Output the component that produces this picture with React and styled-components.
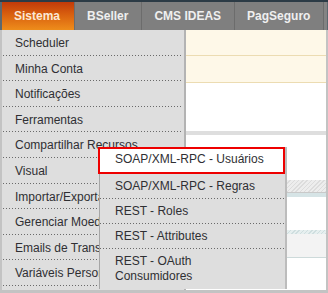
import React from 'react';
import styled, { createGlobalStyle, css } from 'styled-components';

const Global = createGlobalStyle`
  html, body { margin: 0; padding: 0; background: #fff; }
  * { box-sizing: border-box; }
`;

const Frame = styled.div`
  width: 328px;
  height: 293px;
  background: #c3c3c3;
  padding: 0 2px 3px;
  display: flex;
  flex-direction: column;
  font-family: "Liberation Sans", Arial, sans-serif;
  font-size: 12px;
`;

const Nav = styled.div`
  display: flex;
  height: 30px;
  margin: 0 -2px;
  padding: 0 3px 0 2px;
  border-top: 2px solid #2c3b46;
  background: #848484;
  box-shadow: inset 2px 0 0 #5c6870, inset -1px 0 0 #5c6870;
`;

const Tab = styled.div`
  height: 28px;
  line-height: 28px;
  font-weight: bold;
  white-space: nowrap;
  color: #efefef;
  background: #7f7f7f;
  padding: 0 13px 0 12px;
  border-left: 1px solid #6c6c6c;
  ${(p) => p.$last && css`border-right: 1px solid #6c6c6c;`}
  ${(p) =>
    p.$active &&
    css`
      border-left: 0;
      padding: 0 14px 0 12px;
      color: #fbe8d6;
      background: linear-gradient(to bottom, #c23a09 0%, #d9600f 45%, #ee8d1b 100%);
    `}
`;

const Body = styled.div`
  flex: 1;
  position: relative;
  display: flex;
  background: #fff;
`;

const Menu = styled.ul`
  width: 184px;
  margin: 0;
  padding: 0;
  list-style: none;
  background: #dedede;
  border-right: 2px solid #b3b3b3;
`;

const dotted = css`
  background-image: linear-gradient(to right, #6a6a6a 1px, transparent 1px);
  background-size: 3px 1px;
  background-repeat: repeat-x;
  background-position: 0 100%;
`;

const MenuItem = styled.li`
  height: 25.6px;
  margin: 0 1px;
  padding: 2px 0 0 12px;
  line-height: 23.6px;
  color: #2f2f33;
  white-space: nowrap;
  ${dotted}
`;

const Content = styled.div`
  flex: 1;
  display: flex;
  flex-direction: column;
`;

const Band = styled.div`
  height: ${(p) => p.$h}px;
  flex: none;
  background: ${(p) => p.$bg || '#fff'};
  ${(p) => p.$line && css`border-bottom: 1px solid ${p.$line};`}
`;

const Hatch = styled.div`
  height: ${(p) => p.$h}px;
  flex: none;
  background: repeating-linear-gradient(
    -45deg,
    ${(p) => p.$a} 0px,
    ${(p) => p.$a} 1px,
    ${(p) => p.$b} 1px,
    ${(p) => p.$b} 3px
  );
  ${(p) => p.$line && css`border-bottom: 1px solid ${p.$line};`}
`;

const Flyout = styled.ul`
  position: absolute;
  left: 97px;
  top: 117px;
  width: 188px;
  margin: 0;
  padding: 0;
  list-style: none;
  background: #dedede;
  border-left: 1px solid #a6a6a6;
  border-right: 2px solid #bcbcbc;
`;

const SubItem = styled.li`
  position: relative;
  padding: 5px 20px 5px 15px;
  line-height: 15px;
  color: #2f2f33;
  ${(p) => !p.$noline && dotted}
  ${(p) =>
    p.$active &&
    css`
      padding: 5px 20px 7px 15px;
      background: #fff;
      &::after {
        content: '';
        position: absolute;
        top: 0;
        bottom: 0;
        left: -2px;
        right: 0;
        border: 2px solid #ee0000;
      }
    `}
`;

const tabs = ['Sistema', 'BSeller', 'CMS IDEAS', 'PagSeguro'];
const items = [
  'Scheduler',
  'Minha Conta',
  'Notificações',
  'Ferramentas',
  'Compartilhar Recursos',
  'Visual',
  'Importar/Exportar',
  'Gerenciar Moedas',
  'Emails de Transação',
  'Variáveis Personalizadas',
];

export default function App() {
  return (
    <>
      <Global />
      <Frame>
        <Nav>
          {tabs.map((t, i) => (
            <Tab key={t} $active={i === 0} $last={i === tabs.length - 1}>
              {t}
            </Tab>
          ))}
        </Nav>
        <Body>
          <Menu>
            {items.map((t) => (
              <MenuItem key={t}>{t}</MenuItem>
            ))}
          </Menu>
          <Content>
            <Band $h={26} $bg="#fef8e8" $line="#ecdcb2" />
            <Band $h={27} $bg="#fef8e8" $line="#ecdcb2" />
            <Band $h={48} />
            <Band $h={4} $bg="#dedede" />
            <Band $h={45} />
            <Hatch $h={13} $a="#dcdcdc" $b="#ededed" $line="#c9c9c9" />
            <Band $h={4} $bg="#d6e4e6" />
            <Band $h={33} />
            <Hatch $h={4} $a="#cfdedf" $b="#e6efef" />
            <Band $h={24} $bg="#f3f3f3" $line="#cddada" />
            <Band $h={31} />
          </Content>
          <Flyout>
            <SubItem $active $noline>SOAP/XML-RPC - Usuários</SubItem>
            <SubItem>SOAP/XML-RPC - Regras</SubItem>
            <SubItem>REST - Roles</SubItem>
            <SubItem>REST - Attributes</SubItem>
            <SubItem $noline>REST - OAuth Consumidores</SubItem>
          </Flyout>
        </Body>
      </Frame>
    </>
  );
}
